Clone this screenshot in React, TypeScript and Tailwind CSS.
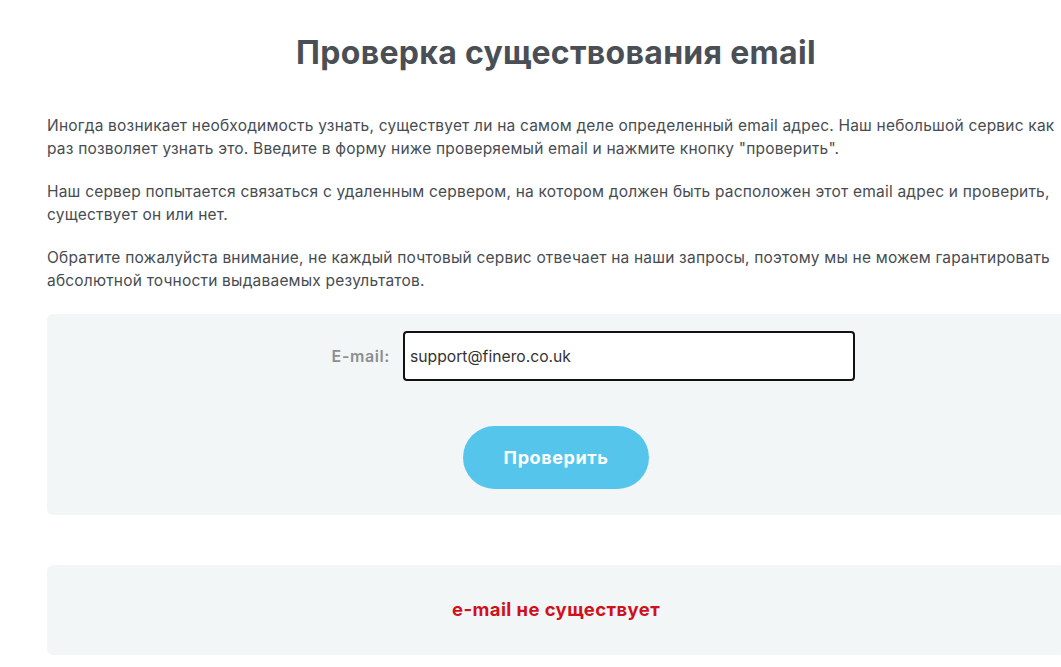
import React from 'react';

export default function App() {
  return (
    <div className="w-full min-h-[667px] overflow-hidden bg-white text-[#474c52]" style={{ fontFamily: 'Inter, "Noto Sans", sans-serif' }}>
      <div className="ml-[47px] w-[1018px]">
        <h1 className="pt-[34px] text-center text-[32px] font-bold leading-[38px] tracking-[0.3px] text-[#4a4f56]">
          Проверка существования email
        </h1>

        <div className="mt-[42px] space-y-[20px] text-[15.5px] leading-[23px] tracking-[0.2px]">
          <p>
            Иногда возникает необходимость узнать, существует ли на самом деле определенный email адрес. Наш небольшой сервис как раз позволяет узнать это. Введите в форму ниже проверяемый email и нажмите кнопку "проверить".
          </p>
          <p>
            Наш сервер попытается связаться с удаленным сервером, на котором должен быть расположен этот email адрес и проверить, существует он или нет.
          </p>
          <p>
            Обратите пожалуйста внимание, не каждый почтовый сервис отвечает на наши запросы, поэтому мы не можем гарантировать абсолютной точности выдаваемых результатов.
          </p>
        </div>

        <form className="mt-[22px] h-[201px] rounded-md bg-[#f3f6f7] pt-[17px]" onSubmit={(e) => e.preventDefault()}>
          <div className="flex items-center gap-[13px]">
            <label className="w-[343px] text-right text-[16px] font-semibold tracking-[0.6px] text-[#8c8f92]">E-mail:</label>
            <input
              className="h-[50px] w-[452px] rounded-[4px] border-2 border-[#111] bg-white px-[5px] text-[15.7px] text-[#333] outline-none"
              defaultValue="support@finero.co.uk"
            />
          </div>
          <div className="mt-[45px] flex justify-center">
            <button type="submit" className="h-[63px] w-[186px] rounded-full bg-[#56c5ec] text-[18px] font-bold tracking-[0.6px] text-white">
              Проверить
            </button>
          </div>
        </form>

        <div className="mt-[50px] flex h-[90px] items-center justify-center rounded-md bg-[#f3f6f7]">
          <span className="text-[18.5px] font-bold tracking-[0.4px] text-[#d0111b]">e-mail не существует</span>
        </div>
      </div>
    </div>
  );
}
